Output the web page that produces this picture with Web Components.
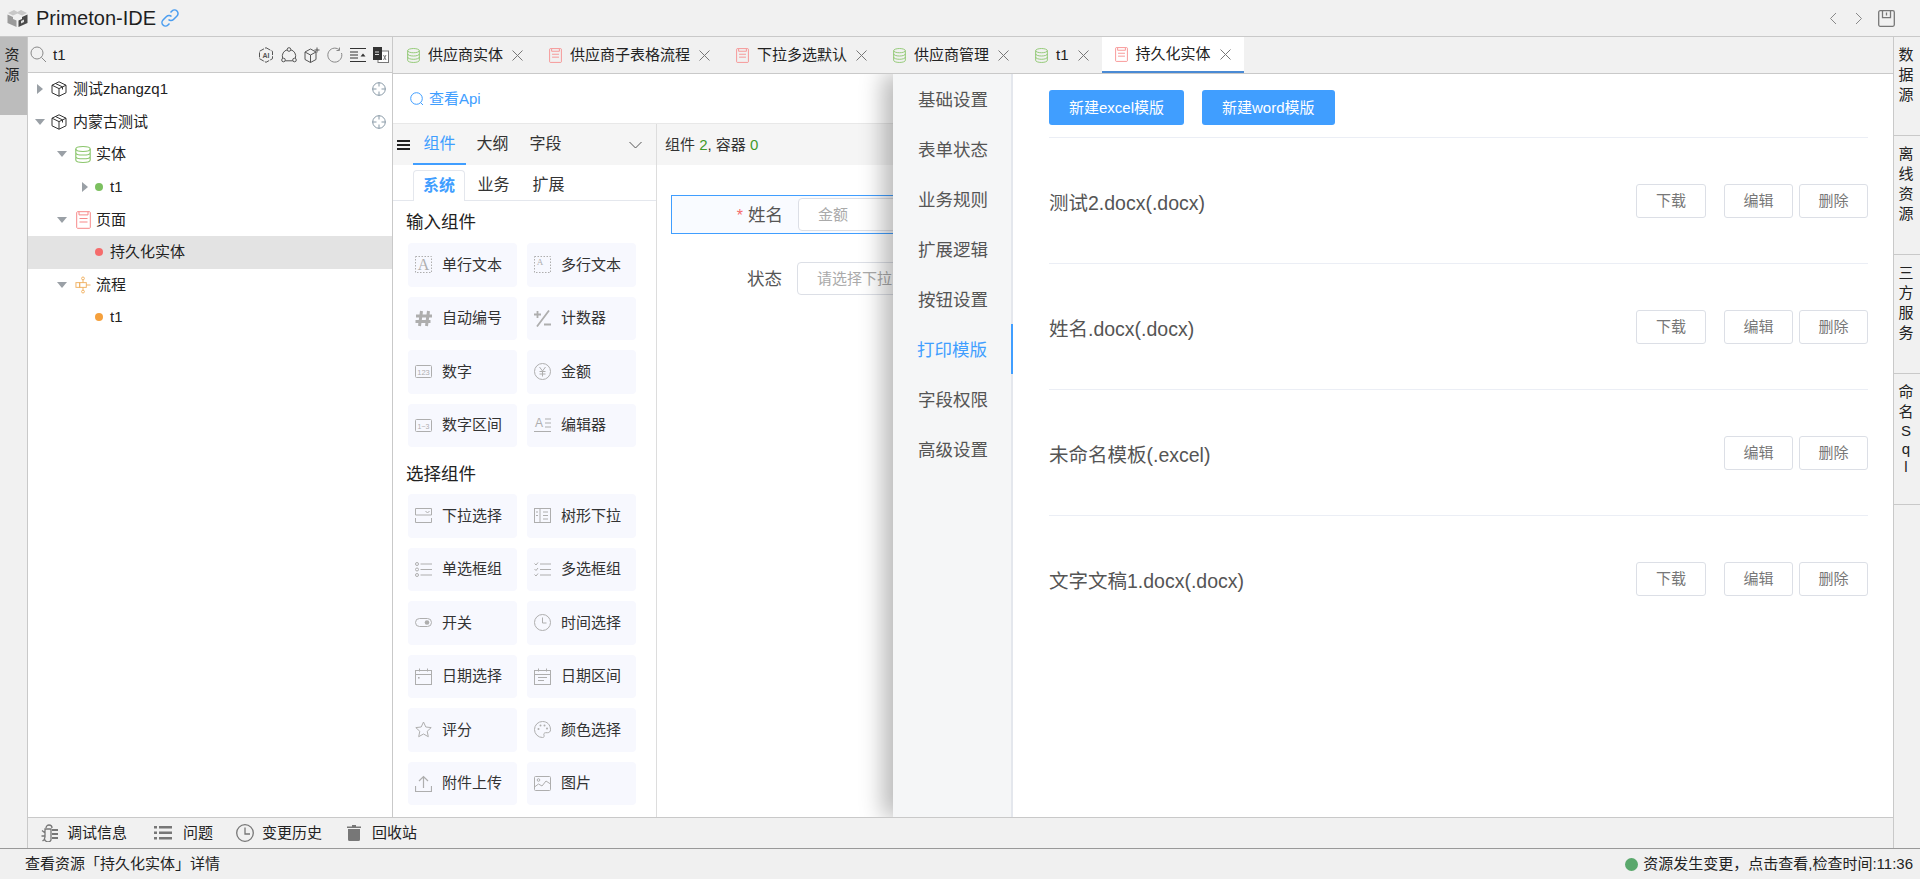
<!DOCTYPE html>
<html>
<head>
<meta charset="utf-8">
<title>Primeton-IDE</title>
<style>
  html, body { margin: 0; height: 100%; overflow: hidden; }
  body { font: 15px/20px "Liberation Sans", "Noto Sans CJK SC", sans-serif; color: #222; background: #f1f1f1; }
</style>
</head>
<body>
<ide-shell>
  <ide-header slot="header"></ide-header>
  <side-rail slot="left" side="left">
    <rail-item active>资源</rail-item>
  </side-rail>
  <res-panel slot="tree">
    <tree-node level="0" arrow="right" icon="cube" locate>测试zhangzq1</tree-node>
    <tree-node level="0" arrow="down" icon="cube" locate>内蒙古测试</tree-node>
    <tree-node level="1" arrow="down" icon="db">实体</tree-node>
    <tree-node level="2" arrow="right" dot="#7cc060">t1</tree-node>
    <tree-node level="1" arrow="down" icon="page">页面</tree-node>
    <tree-node level="2" dot="#f56c6c" selected>持久化实体</tree-node>
    <tree-node level="1" arrow="down" icon="flow">流程</tree-node>
    <tree-node level="2" dot="#f5a03c">t1</tree-node>
  </res-panel>
  <tab-bar slot="tabs">
    <tab-item icon="db">供应商实体</tab-item>
    <tab-item icon="page">供应商子表格流程</tab-item>
    <tab-item icon="page">下拉多选默认</tab-item>
    <tab-item icon="db">供应商管理</tab-item>
    <tab-item icon="db">t1</tab-item>
    <tab-item icon="page" active>持久化实体</tab-item>
  </tab-bar>
  <form-designer slot="editor">
    <comp-palette slot="palette">
      <palette-group title="输入组件">
        <palette-item icon="textA">单行文本</palette-item>
        <palette-item icon="textB">多行文本</palette-item>
        <palette-item icon="hash">自动编号</palette-item>
        <palette-item icon="counter">计数器</palette-item>
        <palette-item icon="num">数字</palette-item>
        <palette-item icon="yen">金额</palette-item>
        <palette-item icon="range">数字区间</palette-item>
        <palette-item icon="editor">编辑器</palette-item>
      </palette-group>
      <palette-group title="选择组件" second>
        <palette-item icon="select">下拉选择</palette-item>
        <palette-item icon="treesel">树形下拉</palette-item>
        <palette-item icon="radio">单选框组</palette-item>
        <palette-item icon="check">多选框组</palette-item>
        <palette-item icon="toggle">开关</palette-item>
        <palette-item icon="clock">时间选择</palette-item>
        <palette-item icon="date">日期选择</palette-item>
        <palette-item icon="daterange">日期区间</palette-item>
        <palette-item icon="star">评分</palette-item>
        <palette-item icon="color">颜色选择</palette-item>
        <palette-item icon="upload">附件上传</palette-item>
        <palette-item icon="image">图片</palette-item>
      </palette-group>
    </comp-palette>
    <form-canvas slot="canvas"></form-canvas>
    <print-drawer slot="drawer">
      <template-row name="测试2.docx(.docx)" download></template-row>
      <template-row name="姓名.docx(.docx)" download></template-row>
      <template-row name="未命名模板(.excel)"></template-row>
      <template-row name="文字文稿1.docx(.docx)" download></template-row>
    </print-drawer>
  </form-designer>
  <side-rail slot="right" side="right">
    <rail-item>数据源</rail-item>
    <rail-item>离线资源</rail-item>
    <rail-item>三方服务</rail-item>
    <rail-item style="--pad:28px">命名<span style="display:block;line-height:18px">S<br>q<br>l</span></rail-item>
  </side-rail>
  <bottom-bar slot="bottom"></bottom-bar>
  <status-bar slot="status"></status-bar>
</ide-shell>

<script>
  // 아이콘 모음 (viewBox 17x17 기준)
  const t = (s, x, y, size, fam) => `<text x="${x}" y="${y}" font-size="${size}" text-anchor="middle" fill="currentColor" stroke="none" font-family="${fam || 'Liberation Sans'}">${s}</text>`;
  const ICONS = {
    textA: `<rect x=".5" y=".5" width="16" height="16" stroke-dasharray="1.5 1.5"/>` + t('A', 8.5, 14, 16, 'Liberation Serif'),
    textB: `<rect x=".5" y=".5" width="16" height="16" stroke-dasharray="1.5 1.5"/>` + t('A', 6, 8.5, 9, 'Liberation Serif'),
    hash: `<path stroke-width="3" d="M6.5 1 4.5 16M13.5 1l-2 15M1 6h16M.5 11.5h15"/>`,
    counter: `<path stroke-width="1.8" d="M0 4.5h7M3.5 1v7M15 .5 3 16.5M10 14.5h7"/>`,
    num: `<rect x=".5" y="2.5" width="16" height="12" rx="1"/>` + t('123', 8.5, 11.5, 7.5),
    range: `<rect x=".5" y="2.5" width="16" height="12" rx="1"/>` + t('1~3', 8.5, 11.5, 7),
    yen: `<circle cx="8.5" cy="8.5" r="8"/><path d="M5.5 4l3 4 3-4M8.5 8v5.500M5.500 8.500h6M5.500 11h6"/>`,
    editor: t('A', 5, 10, 12) + `<path d="M11 2h6M11 6h6M11 10h6M0 14.500h17" stroke-width="1.200"/>`,
    select: `<path d="M.5 8V1.500h16V8zM.5 11v4.500h16V11"/><path d="M10.500 4l2 2 2-2"/>`,
    treesel: `<rect x=".5" y="1.500" width="16" height="14"/><path d="M6 1.500v14M9 5h5M9 8.500h5M9 12h5M2 5h2M2 8.500h2"/>`,
    radio: `<circle cx="2" cy="3" r="1.500"/><circle cx="2" cy="8.500" r="1.500"/><circle cx="2" cy="14" r="1.500"/><path d="M5.500 3H17M5.500 8.500H17M5.500 14H17"/>`,
    check: `<path d="M.5 2.500l1.500 1.500L4 1.500M.5 8l1.500 1.500L4 7M.5 13.500 2 15l2-2.500M6 3H17M6 8.500H17M6 14H17"/>`,
    toggle: `<rect x=".5" y="4.500" width="16" height="8" rx="4"/><circle cx="12" cy="8.500" r="2.300" fill="currentColor" stroke="none"/>`,
    clock: `<circle cx="8.500" cy="8.500" r="8"/><path d="M8.500 3.500v5.500h4"/>`,
    date: `<rect x=".5" y="2.500" width="16" height="14"/><path d="M.5 6.500h16M4.500 .5v3M12.500 .5v3"/><rect x="3" y="9" width="1.600" height="1.600" fill="currentColor" stroke="none"/>`,
    daterange: `<rect x=".5" y="2.500" width="16" height="14"/><path d="M.5 6.500h16M4.500 .5v3M12.500 .5v3M4 9.500h9M4 12.500h6"/>`,
    star: `<path d="M8.500 1l2.300 5 5.400.6-4 3.700 1.100 5.400-4.800-2.700-4.800 2.700 1.100-5.400-4-3.700 5.400-.6z"/>`,
    color: `<path d="M8.500.5a8 8 0 0 0 0 16c1.600 0 2-1.200 1.500-2.300-.6-1.300.2-2.500 1.600-2.500h2.100c1.500 0 2.800-1 2.800-2.900C16.500 3.600 13 .5 8.500.5z"/><circle cx="4.500" cy="8" r="1" fill="currentColor" stroke="none"/><circle cx="6.500" cy="4.500" r="1" fill="currentColor" stroke="none"/><circle cx="10.500" cy="4.500" r="1" fill="currentColor" stroke="none"/><circle cx="13" cy="7.500" r="1" fill="currentColor" stroke="none"/>`,
    upload: `<path d="M8.500 13V2M4 6l4.500-4.500L13 6M.5 11v5.500h16V11" stroke-width="1.200"/>`,
    image: `<rect x=".5" y="1.500" width="16" height="14" rx="1"/><circle cx="4.500" cy="5" r="1.300"/><path d="M.5 12l4-3 3.500 2 4-5 4.500 3"/>`
  };
  const svg = (w, h, vb, inner, extra) => `<svg width="${w}" height="${h}" viewBox="${vb}" fill="none" stroke="currentColor" ${extra || ''}>${inner}</svg>`;
  const KIND = {
    cube: () => svg(16, 16, '0 0 16 16', `<path d="M8 .8 15 4.200v7.600L8 15.200 1 11.800V4.200zM1 4.200 8 7.600l7-3.400M8 7.600v7.600M4.500 2.500l7 3.400v2.600"/>`, 'style="color:#333"'),
    db: (w = 16, h = 17) => svg(w, h, '0 0 14 17', `<ellipse cx="7" cy="3" rx="6.300" ry="2.400"/><path d="M.7 3v11c0 1.300 2.800 2.400 6.300 2.400s6.300-1.100 6.300-2.400V3M.7 6.700c0 1.300 2.800 2.400 6.300 2.400s6.300-1.100 6.300-2.400M.7 10.400c0 1.300 2.800 2.400 6.300 2.400s6.300-1.100 6.300-2.400"/>`, 'preserveAspectRatio="none" style="color:#8cc66d"'),
    page: (w = 15, h = 18) => svg(w, h, '0 0 15 18', `<path d="M3 .7H1.500a1 1 0 0 0-.8.8v15a1 1 0 0 0 .8.8h12a1 1 0 0 0 .8-.8v-15a1 1 0 0 0-.8-.8H12M3 .7v3.200h9V.7zM3.500 7.500h8M3.500 11h8"/>`, 'preserveAspectRatio="none" style="color:#f78989"'),
    flow: () => svg(16, 18, '0 0 17 18', `<circle cx="8.500" cy="2" r="1.500"/><circle cx="8.500" cy="16" r="1.500"/><path d="M8.500 3.500v3M8.500 11.500v3"/><rect x="1" y="6.500" width="4" height="5"/><rect x="5" y="6.500" width="7" height="5"/><path d="M12 9h4.500"/>`, 'style="color:#f0b060"')
  };

  // 공통 베이스: shadow DOM 열고 style + render 결과 넣기
  class Base extends HTMLElement {
    connectedCallback() {
      if (this.shadowRoot) return;
      this.attachShadow({ mode: 'open' });
      this.shadowRoot.innerHTML = `<style>${this.constructor.css}</style>${this.render()}`;
    }
    render() { return '<slot></slot>'; }
  }

  class IdeShell extends Base {
    static css = `
      :host { display: flex; flex-direction: column; height: 100vh; }
      .body { flex: 1; display: flex; min-height: 0; }
      .center { flex: 1; display: flex; flex-direction: column; min-width: 0; }
      .work { flex: 1; display: flex; min-height: 0; }
      .editor { flex: 1; display: flex; flex-direction: column; min-width: 0; }
      ::slotted([slot=editor]) { flex: 1; min-height: 0; }
    `;
    render() {
      return `<slot name="header"></slot>
        <div class="body">
          <slot name="left"></slot>
          <div class="center">
            <div class="work">
              <slot name="tree"></slot>
              <div class="editor"><slot name="tabs"></slot><slot name="editor"></slot></div>
            </div>
            <slot name="bottom"></slot>
          </div>
          <slot name="right"></slot>
        </div>
        <slot name="status"></slot>`;
    }
  }

  class IdeHeader extends Base {
    static css = `
      :host { display: flex; align-items: center; height: 36px; border-bottom: 1px solid #c9c9c9; padding-left: 7px; padding-right: 25px; color: #222; }
      .logo { margin-right: 8px; }
      .name { font-size: 20px; color: #1f1f1f; margin-right: 4px; line-height: 36px; }
      .sp { flex: 1; }
      .nav { color: #888; display: flex; }
      .save { color: #777; margin-left: 15px; }
    `;
    render() {
      return `<svg class="logo" width="21" height="20" viewBox="0 0 21 20">
          <path fill="#c8c8c8" d="M1 5 7 2l3.500 2L14 2l6 3-5 2.500-4.500-2-4.500 2z"/>
          <path fill="#9a9a9a" d="M.5 6.500 6 9v2l3.500 1.500V19L.5 15z"/>
          <path fill="#4a4a4a" d="M20.500 6.500 15 9v2l-3.500 1.500V19l9-4z"/>
          <path fill="#e0e0e0" d="M17 11.500l-3 1.400v2.500l3-1.400z"/>
        </svg>
        <span class="name">Primeton-IDE</span>
        <svg width="20" height="20" viewBox="0 0 20 20" fill="none" stroke="#4a9df0" stroke-width="1.500"><path d="M8.500 11.500a3.500 3.500 0 0 0 5 0l3.500-3.500a3.500 3.500 0 0 0-5-5L10.500 4.500"/><path d="M11.500 8.500a3.500 3.500 0 0 0-5 0L3 12a3.500 3.500 0 0 0 5 5l1.500-1.500"/></svg>
        <span class="sp"></span>
        <svg class="nav" style="margin-right:18px" width="8" height="13" viewBox="0 0 8 13" fill="none" stroke="currentColor"><path d="M7 1 1.500 6.500 7 12"/></svg>
        <svg class="nav" width="8" height="13" viewBox="0 0 8 13" fill="none" stroke="currentColor"><path d="M1 1l5.500 5.500L1 12"/></svg>
        <svg class="save" width="17" height="17" viewBox="0 0 17 17" fill="none" stroke="currentColor" stroke-width="1.300"><rect x=".7" y=".7" width="15.600" height="15.600" rx="1.500"/><path d="M4.500 .7v7h8v-7M8.500 2.500v3"/></svg>`;
    }
  }

  class SideRail extends Base {
    static css = `
      :host { display: block; width: 27px; flex: none; background: #f1f1f1; }
      :host([side=left]) { border-right: 1px solid #c9c9c9; }
      :host([side=right]) { border-left: 1px solid #c9c9c9; width: 26px; }
    `;
  }

  class RailItem extends Base {
    static css = `
      :host { display: block; padding: 8px 0 var(--pad, 30px); border-bottom: 1px solid #c9c9c9; font-size: 15px; line-height: 20px; color: #222; }
      :host([active]) { background: #bcbcbc; border-bottom: 0; padding-bottom: 30px; }
      div { width: 16px; margin: 0 auto 0 4px; text-align: center; word-break: break-all; }
    `;
    render() { return '<div><slot></slot></div>'; }
  }

  class ResPanel extends Base {
    static css = `
      :host { display: block; width: 364px; flex: none; background: #fff; border-right: 1px solid #c9c9c9; }
      .search { height: 35px; background: #f1f1f1; border-bottom: 1px solid #c9c9c9; display: flex; align-items: center; padding-left: 2px; }
      .kw { margin-left: 6px; font-size: 15px; flex: 1; }
      .tools { display: flex; gap: 7px; padding-right: 3px; color: #555; }
    `;
    render() {
      return `<div class="search">
          <svg width="17" height="17" viewBox="0 0 17 17" fill="none" stroke="#8a8a8a"><circle cx="7" cy="7" r="6"/><path d="M11.500 11.500 16 16"/></svg>
          <span class="kw">t1</span>
          <div class="tools">
            <svg width="16" height="16" viewBox="0 0 16 16" fill="none" stroke="currentColor"><path d="M8 .7 14.500 4.300v7.400L8 15.300 1.500 11.700V4.300z" stroke-dasharray="5 1.200"/><text x="8" y="10.500" font-size="7" font-weight="bold" text-anchor="middle" fill="currentColor" stroke="none" font-family="Liberation Sans">AI</text></svg>
            <svg width="16" height="16" viewBox="0 0 16 16" fill="none" stroke="currentColor"><circle cx="8" cy="2.500" r="1.800"/><circle cx="2.500" cy="13" r="1.800"/><circle cx="13.500" cy="13" r="1.800"/><path d="M6.200 2.800A6.500 6.500 0 0 0 1.600 11M9.800 2.800A6.500 6.500 0 0 1 14.400 11M4.300 13.800h7.400"/></svg>
            <svg width="16" height="16" viewBox="0 0 16 16" fill="none" stroke="currentColor"><path d="M6.500 2 12 5v7.500l-5.500 3-5.500-3V5zM1 5l5.500 3L12 5M6.500 8v7.500M13 .5v5M10.500 3h5"/></svg>
            <svg width="16" height="16" viewBox="0 0 16 16" fill="none" stroke="#888"><path d="M14.500 6a7 7 0 1 1-2.500-3.500M12.500 .5v3h-3"/></svg>
            <svg width="16" height="16" viewBox="0 0 16 16" fill="none" stroke="#333"><path d="M0 1.500h16M0 8h8M0 14.500h16M0 5h8M0 11h8"/><path d="M10.500 9.500l2.500-3 2.500 3z" fill="#333" stroke="none"/></svg>
            <svg width="16" height="16" viewBox="0 0 16 16"><rect x="5" y="4" width="10.500" height="11.500" fill="#fff" stroke="#777"/><rect x="0" y="0" width="9" height="13" fill="#333"/><path d="M2 5h4M2 7.500h4" stroke="#ddd" fill="none"/><path d="M10.500 8l2.500 5M13 8l-2.500 5" stroke="#777" fill="none"/></svg>
          </div>
        </div>
        <slot></slot>`;
    }
  }

  class TreeNode extends Base {
    static css = `
      :host { display: flex; align-items: center; height: 32.600px; font-size: 15px; color: #222; }
      :host([selected]) { background: #e3e3e3; }
      .arrow { width: 0; height: 0; flex: none; }
      .arrow.right { border-left: 6px solid #9aa0a6; border-top: 5px solid transparent; border-bottom: 5px solid transparent; }
      .arrow.down { border-top: 6px solid #9aa0a6; border-left: 5px solid transparent; border-right: 5px solid transparent; margin-left: -2px; }
      .ic { display: flex; flex: none; width: 16px; justify-content: center; }
      .dot { width: 8px; height: 8px; border-radius: 50%; flex: none; margin: 0 7px 0 4px; }
      .sp { flex: 1; }
      .loc { color: #8899a6; display: flex; margin-right: 6px; }
      .arr { width: 9px; display: flex; flex: none; }
    `;
    render() {
      const lv = +this.getAttribute('level');
      const a = this.getAttribute('arrow');
      const icon = this.getAttribute('icon');
      const dot = this.getAttribute('dot');
      const left = [9, 31, 54][lv];
      const gap = [[5, 6], [7, 5], [0, 0]][lv];
      const arrow = `<span class="arr" style="margin-left:${left}px">${a ? `<i class="arrow ${a}"></i>` : ''}</span>`;
      const mark = dot
        ? `<span class="dot" style="background:${dot}"></span>`
        : `<span class="ic" style="margin:0 ${gap[1]}px 0 ${gap[0]}px">${KIND[icon]()}</span>`;
      const loc = this.hasAttribute('locate')
        ? `<span class="sp"></span><svg class="loc" width="14" height="14" viewBox="0 0 14 14" fill="none" stroke="currentColor"><circle cx="7" cy="7" r="6.300"/><path d="M7 .5v4M7 9.500v4M.5 7h4M9.500 7h4"/></svg>` : '';
      return `${arrow}${mark}<slot></slot>${loc}`;
    }
  }

  class TabBar extends Base {
    static css = `:host { display: flex; height: 36px; flex: none; border-bottom: 1px solid #c9c9c9; background: #f1f1f1; padding-left: 1px; }`;
  }

  class TabItem extends Base {
    static css = `
      :host { display: flex; align-items: center; padding: 0 13px; gap: 7px; height: 36px; box-sizing: border-box; font-size: 15px; color: #222; }
      :host([active]) { background: #fff; border-bottom: 2px solid #4a8ad4; }
      .ic { display: flex; width: 14px; }
      .x { margin-left: 2px; color: #777; }
    `;
    render() {
      return `<span class="ic">${KIND[this.getAttribute('icon')](13, 15)}</span><slot></slot>
        <svg class="x" width="11" height="11" viewBox="0 0 11 11" stroke="currentColor"><path d="M.5.500l10 10M10.500.500l-10 10"/></svg>`;
    }
  }

  class FormDesigner extends Base {
    static css = `
      :host { display: flex; flex-direction: column; position: relative; overflow: hidden; background: #fff; }
      .api { height: 49px; flex: none; display: flex; align-items: center; padding-left: 17px; gap: 5px; color: #409eff; font-size: 15px; border-bottom: 1px solid #e8e8e8; }
      .row { flex: 1; display: flex; min-height: 0; }
      ::slotted([slot=drawer]) { position: absolute; top: 0; bottom: 0; left: 500px; right: 0; }
    `;
    render() {
      return `<div class="api"><svg width="14" height="14" viewBox="0 0 14 14" fill="none" stroke="currentColor"><circle cx="6.500" cy="6.500" r="5.800"/><path d="M10.500 10.500 13 13"/></svg><span>查看Api</span></div>
        <div class="row"><slot name="palette"></slot><slot name="canvas"></slot></div>
        <slot name="drawer"></slot>`;
    }
  }

  class CompPalette extends Base {
    static css = `
      :host { display: block; width: 263px; flex: none; border-right: 1px solid #ddd; overflow: hidden; background: #fff; }
      .head { height: 41px; background: #f5f5f5; display: flex; align-items: center; font-size: 16px; color: #333; }
      .menu { margin: 0 3px 0 4px; display: flex; }
      .tab { width: 53px; text-align: center; line-height: 40px; height: 41px; box-sizing: border-box; }
      .tab.on { color: #409eff; border-bottom: 2px solid #409eff; }
      .chev { margin-left: auto; margin-right: 14px; color: #555; }
      .sub { height: 36px; display: flex; border-bottom: 1px solid #e4e7ed; box-sizing: border-box; padding-left: 20px; font-size: 16px; align-items: flex-end; }
      .st { width: 55px; text-align: center; height: 30px; line-height: 30px; box-sizing: border-box; color: #333; }
      .st.on { width: 52px; margin-right: 1px; color: #409eff; font-weight: bold; border: 1px solid #e4e7ed; border-bottom: 0; border-radius: 4px 4px 0 0; height: 31px; margin-bottom: -1px; background: #fff; }
      .pad { padding: 0 20px 0 13px; }
    `;
    render() {
      const tabs = ['组件', '大纲', '字段'].map((s, i) => `<div class="tab ${i ? '' : 'on'}">${s}</div>`).join('');
      const subs = ['系统', '业务', '扩展'].map((s, i) => `<div class="st ${i ? '' : 'on'}">${s}</div>`).join('');
      return `<div class="head">
          <svg class="menu" width="13" height="10" viewBox="0 0 13 10" fill="#222"><rect width="13" height="2"/><rect y="4" width="13" height="2"/><rect y="8" width="13" height="2"/></svg>
          ${tabs}
          <svg class="chev" width="13" height="8" viewBox="0 0 13 8" fill="none" stroke="currentColor"><path d="M.5 1l6 6 6-6"/></svg>
        </div>
        <div class="sub">${subs}</div>
        <div class="pad"><slot></slot></div>`;
    }
  }

  class PaletteGroup extends Base {
    static css = `
      :host { display: block; }
      h4 { margin: 0; font-weight: normal; font-size: 17.500px; line-height: 24px; padding: 9px 0 9px; color: #222; }
      :host([second]) h4 { padding: 15px 0 8px; }
      .grid { display: grid; grid-template-columns: 109px 109px; column-gap: 10px; row-gap: 10px; grid-auto-rows: 43.500px; padding-left: 2px; }
    `;
    render() {
      return `<h4>${this.getAttribute('title')}</h4><div class="grid"><slot></slot></div>`;
    }
  }

  class PaletteItem extends Base {
    static css = `
      :host { display: flex; align-items: center; background: #f7f8fe; border-radius: 4px; font-size: 15px; color: #333; padding-left: 7px; gap: 10px; }
      svg { flex: none; color: #aeaeae; }
    `;
    render() {
      return `<svg width="17" height="17" viewBox="0 0 17 17" fill="none" stroke="currentColor">${ICONS[this.getAttribute('icon')]}</svg><slot></slot>`;
    }
  }

  class FormCanvas extends Base {
    static css = `
      :host { display: block; flex: 1; min-width: 0; background: #fff; overflow: hidden; }
      .head { height: 41px; background: #f5f5f5; display: flex; align-items: center; padding-left: 8px; font-size: 15px; color: #333; white-space: pre; }
      .head b { font-weight: normal; color: #3f9a2a; }
      .body { padding: 30px 0 0 14px; width: 600px; }
      .row { display: flex; align-items: center; height: 38px; }
      .row.sel { border: 1px solid #409eff; background: #f9fbff; height: 37px; margin-bottom: 25px; }
      .lab { width: 111px; text-align: right; font-size: 17.500px; color: #555; margin-right: 15px; flex: none; padding-top: 2px; }
      .lab i { color: #f56c6c; font-style: normal; font-size: 16px; margin-right: 5px; }
      .inp { width: 300px; height: 33px; box-sizing: border-box; border: 1px solid #dcdfe6; border-radius: 4px; padding-left: 19px; line-height: 32px; color: #aaa; font-size: 15px; background: #fff; }
    `;
    render() {
      return `<div class="head">组件 <b>2</b>, 容器 <b>0</b></div>
        <div class="body">
          <div class="row sel"><span class="lab"><i>*</i>姓名</span><span class="inp">金额</span></div>
          <div class="row"><span class="lab">状态</span><span class="inp">请选择下拉</span></div>
        </div>`;
    }
  }

  class PrintDrawer extends Base {
    static css = `
      :host { display: flex; background: #fff; box-shadow: -10px 0 22px rgba(0,0,0,.28); }
      nav { width: 118px; flex: none; background: #f5f6f7; border-right: 2px solid #e4e7ed; }
      nav div { height: 50px; line-height: 52px; text-align: center; font-size: 17.500px; color: #555; margin-right: -2px; }
      nav div.on { color: #409eff; border-right: 2px solid #409eff; }
      main { flex: 1; padding: 16px 25px 0 36px; }
      .top { display: flex; gap: 18px; padding-bottom: 12px; border-bottom: 1px solid #ebeef5; }
      .btn { height: 35px; line-height: 35px; padding: 0 20px; background: #409eff; color: #fff; border-radius: 3px; font-size: 15px; }
    `;
    render() {
      const items = ['基础设置', '表单状态', '业务规则', '扩展逻辑', '按钮设置', '打印模版', '字段权限', '高级设置'];
      return `<nav>${items.map(s => `<div class="${s === '打印模版' ? 'on' : ''}">${s}</div>`).join('')}</nav>
        <main>
          <div class="top"><span class="btn">新建excel模版</span><span class="btn">新建word模版</span></div>
          <slot></slot>
        </main>`;
    }
  }

  class TemplateRow extends Base {
    static css = `
      :host { display: flex; align-items: center; height: 125px; border-bottom: 1px solid #ebeef5; }
      :host(:last-child) { border-bottom: 0; }
      .n { flex: 1; font-size: 19.500px; color: #555; padding-top: 5px; }
      .b { width: 69px; height: 34px; line-height: 32px; text-align: center; box-sizing: border-box; border: 1px solid #dcdfe6; border-radius: 3px; font-size: 15px; color: #777; margin-left: 6px; }
      .d { width: 70px; margin-right: 12px; }
    `;
    render() {
      const dl = this.hasAttribute('download') ? '<span class="b d">下载</span>' : '';
      return `<span class="n">${this.getAttribute('name')}</span>${dl}<span class="b">编辑</span><span class="b">删除</span>`;
    }
  }

  class BottomBar extends Base {
    static css = `
      :host { display: flex; align-items: center; height: 30px; flex: none; background: #f1f1f1; border-top: 1px solid #c9c9c9; font-size: 15px; color: #222; padding-left: 13px; }
      .it { display: flex; align-items: center; gap: 8px; color: #222; }
      svg { color: #777; flex: none; }
    `;
    render() {
      return `<span class="it" style="margin-right:27px"><svg width="18" height="18" viewBox="0 0 18 18" fill="none" stroke="currentColor" stroke-width="1.300"><path d="M5 4a3 3 0 0 1 6 0M3.500 8.500 1 6.500M3.500 12H.5M4 15l-2.500 2M4 5h6v11a3 3 0 0 1-6-3z"/><path d="M11 6h6M11 10h6M11 14h6" stroke-width="1.800"/></svg>调试信息</span>
        <span class="it" style="margin-right:23px"><svg width="18" height="14" viewBox="0 0 18 14" style="margin-right:3px" fill="currentColor"><rect width="3" height="2.500"/><rect x="5" width="13" height="2.500"/><rect y="5.500" width="3" height="2.500"/><rect x="5" y="5.500" width="13" height="2.500"/><rect y="11" width="3" height="2.500"/><rect x="5" y="11" width="13" height="2.500"/></svg>问题</span>
        <span class="it" style="margin-right:25px"><svg width="18" height="18" viewBox="0 0 18 18" fill="none" stroke="currentColor" stroke-width="1.300"><circle cx="9" cy="9" r="8.300"/><path d="M9 3.500V10h5"/></svg>变更历史</span>
        <span class="it"><svg width="14" height="16" viewBox="0 0 14 16" style="margin-right:3px" fill="currentColor"><path d="M5 0h4v1.500h5V3H0V1.500h5zM1 4h12v10.500a1.500 1.500 0 0 1-1.500 1.500h-9A1.500 1.500 0 0 1 1 14.500z"/></svg>回收站</span>`;
    }
  }

  class StatusBar extends Base {
    static css = `
      :host { display: flex; align-items: center; height: 30px; flex: none; background: #f0f0f0; border-top: 1px solid #999; font-size: 15px; color: #222; padding: 0 7px 0 25px; }
      .sp { flex: 1; }
      i { width: 13px; height: 13px; border-radius: 50%; background: #5aa86c; margin-right: 5px; }
    `;
    render() {
      return `<span>查看资源「持久化实体」详情</span><span class="sp"></span><i></i><span>资源发生变更，点击查看,检查时间:11:36</span>`;
    }
  }

  customElements.define('ide-shell', IdeShell);
  customElements.define('ide-header', IdeHeader);
  customElements.define('side-rail', SideRail);
  customElements.define('rail-item', RailItem);
  customElements.define('res-panel', ResPanel);
  customElements.define('tree-node', TreeNode);
  customElements.define('tab-bar', TabBar);
  customElements.define('tab-item', TabItem);
  customElements.define('form-designer', FormDesigner);
  customElements.define('comp-palette', CompPalette);
  customElements.define('palette-group', PaletteGroup);
  customElements.define('palette-item', PaletteItem);
  customElements.define('form-canvas', FormCanvas);
  customElements.define('print-drawer', PrintDrawer);
  customElements.define('template-row', TemplateRow);
  customElements.define('bottom-bar', BottomBar);
  customElements.define('status-bar', StatusBar);
</script>
</body>
</html>
